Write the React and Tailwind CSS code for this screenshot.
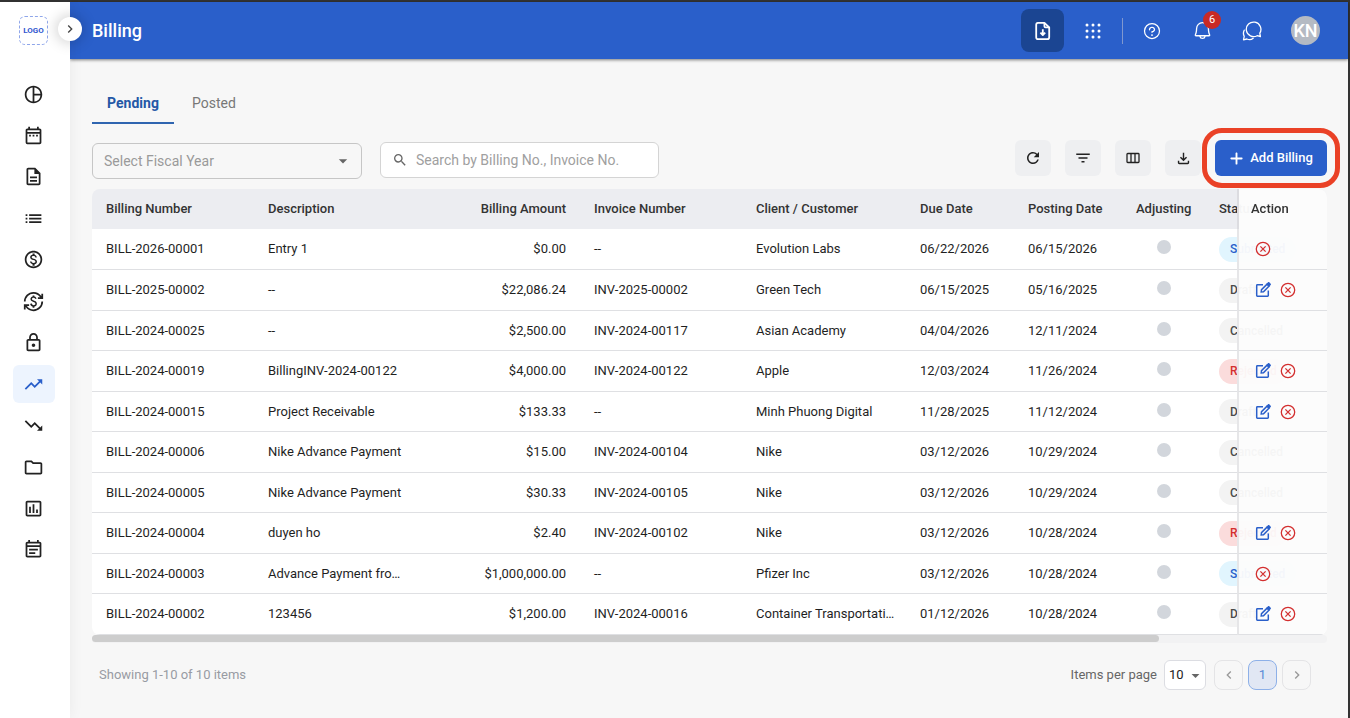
import { useState } from "react";
import clsx from "clsx";
import {
  MdPieChartOutline,
  MdOutlineDateRange,
  MdOutlineDescription,
  MdList,
  MdOutlineMonetizationOn,
  MdCurrencyExchange,
  MdOutlineLock,
  MdTrendingUp,
  MdTrendingDown,
  MdOutlineFolder,
  MdOutlineInsertChart,
  MdOutlineEventNote,
  MdChevronRight,
  MdChevronLeft,
  MdArrowDropDown,
  MdSearch,
  MdRefresh,
  MdFilterList,
} from "react-icons/md";
import { PiBell, PiQuestion } from "react-icons/pi";
import { FaPlus } from "react-icons/fa6";

const navItems = [
  { label: "Dashboard", icon: MdPieChartOutline },
  { label: "Calendar", icon: MdOutlineDateRange },
  { label: "Documents", icon: MdOutlineDescription },
  { label: "Lists", icon: MdList },
  { label: "Payments", icon: MdOutlineMonetizationOn },
  { label: "Exchange", icon: MdCurrencyExchange },
  { label: "Closing", icon: MdOutlineLock },
  { label: "Receivables", icon: MdTrendingUp },
  { label: "Payables", icon: MdTrendingDown },
  { label: "Files", icon: MdOutlineFolder },
  { label: "Reports", icon: MdOutlineInsertChart },
  { label: "Notes", icon: MdOutlineEventNote },
];

const statusStyles = {
  Submitted: "bg-[#e1f5fe] text-[#2a5fca]",
  Draft: "bg-[#f3f3f3] text-[#4a4a4a]",
  Cancelled: "bg-[#f3f3f3] text-[#4a4a4a]",
  Rejected: "bg-[#fbdcdc] text-[#d32f2f]",
};

const billings = [
  ["BILL-2026-00001", "Entry 1", "$0.00", "--", "Evolution Labs", "06/22/2026", "06/15/2026", "Submitted"],
  ["BILL-2025-00002", "--", "$22,086.24", "INV-2025-00002", "Green Tech", "06/15/2025", "05/16/2025", "Draft"],
  ["BILL-2024-00025", "--", "$2,500.00", "INV-2024-00117", "Asian Academy", "04/04/2026", "12/11/2024", "Cancelled"],
  ["BILL-2024-00019", "BillingINV-2024-00122", "$4,000.00", "INV-2024-00122", "Apple", "12/03/2024", "11/26/2024", "Rejected"],
  ["BILL-2024-00015", "Project Receivable", "$133.33", "--", "Minh Phuong Digital", "11/28/2025", "11/12/2024", "Draft"],
  ["BILL-2024-00006", "Nike Advance Payment", "$15.00", "INV-2024-00104", "Nike", "03/12/2026", "10/29/2024", "Cancelled"],
  ["BILL-2024-00005", "Nike Advance Payment", "$30.33", "INV-2024-00105", "Nike", "03/12/2026", "10/29/2024", "Cancelled"],
  ["BILL-2024-00004", "duyen ho", "$2.40", "INV-2024-00102", "Nike", "03/12/2026", "10/28/2024", "Rejected"],
  ["BILL-2024-00003", "Advance Payment fro…", "$1,000,000.00", "--", "Pfizer Inc", "03/12/2026", "10/28/2024", "Submitted"],
  ["BILL-2024-00002", "123456", "$1,200.00", "INV-2024-00016", "Container Transportati…", "01/12/2026", "10/28/2024", "Draft"],
];

function EditIcon() {
  return (
    <svg width="16" height="16" viewBox="0 0 16 16" fill="none" stroke="currentColor" strokeWidth="1.5">
      <path d="M8 2.7H2.4a.7.7 0 0 0-.7.7v10.2c0 .4.3.7.7.7h10.2c.4 0 .7-.3.7-.7V8.5" />
      <path d="M6.2 10l.3-2.3 5.6-5.6 2 2-5.6 5.6z" />
      <path d="M11.3 2l1.7-1.7c.4-.4 1-.4 1.3 0l1.4 1.4c.4.4.4.9 0 1.3L14 4.7z" fill="currentColor" stroke="none" />
    </svg>
  );
}

function CancelIcon() {
  return (
    <svg width="16" height="16" viewBox="0 0 16 16" fill="none" stroke="currentColor" strokeWidth="1.3">
      <circle cx="8" cy="8" r="6.7" />
      <path d="M5.4 5.4l5.2 5.2M10.6 5.4l-5.2 5.2" />
    </svg>
  );
}

function DownloadIcon() {
  return (
    <svg width="17" height="17" viewBox="0 -960 960 960" fill="currentColor">
      <path d="M480-320 280-520l56-58 104 104v-326h80v326l104-104 56 58-200 200ZM240-160q-33 0-56.5-23.5T160-240v-120h80v120h480v-120h80v120q0 33-23.5 56.5T720-160H240Z" />
    </svg>
  );
}

function ColumnsIcon() {
  return (
    <svg width="14" height="12" viewBox="0 0 14 12" fill="none" stroke="currentColor" strokeWidth="1.3">
      <rect x="1" y="1.5" width="12" height="9" rx="0.8" />
      <path d="M5 1.5v9M9 1.5v9" />
    </svg>
  );
}

function FileDownIcon() {
  return (
    <svg width="16" height="20" viewBox="0 0 16 20" fill="none" stroke="currentColor" strokeWidth="1.8" strokeLinejoin="round">
      <path d="M3 1.8h6.4l4.8 4.6v9.8a2 2 0 0 1-2 2H3a1.8 1.8 0 0 1-1.8-2V3.8a2 2 0 0 1 1.8-2z" />
      <path d="M9.4 1.8v3.4c0 .7.5 1.2 1.2 1.2h3.6" />
      <path d="M7.8 8.2v5.6M5.4 11.6l2.4 2.4 2.4-2.4" />
    </svg>
  );
}

function ChatIcon() {
  return (
    <svg width="20" height="20" viewBox="0 0 20 20" fill="none" stroke="currentColor" strokeWidth="1.3" strokeLinejoin="round" strokeLinecap="round">
      <path d="M17.8 12.2A7.3 7.3 0 1 0 15.2 14.7l3.2.8z" />
      <path d="M2.2 9.2c-1 2-1 4.2 0 6.1L1.5 18.8l3.4-.8c2 1 4.5.8 6.3-.7" />
    </svg>
  );
}

function DotsIcon() {
  return (
    <svg width="16" height="16" viewBox="0 0 16 16" fill="currentColor">
      {[2, 8, 14].map((y) => [2, 8, 14].map((x) => <circle key={`${x}-${y}`} cx={x} cy={y} r="1.5" />))}
    </svg>
  );
}

function Sidebar() {
  return (
    <aside className="relative z-10 flex w-[70px] shrink-0 flex-col items-center bg-white pr-[3px] shadow-[0_0_14px_rgba(0,0,0,0.06)]">
      <a
        href="#"
        className="mt-[14px] flex size-[29px] items-center justify-center rounded-md border border-dashed border-[#8fa6ea] text-[8px] font-bold text-[#3357d0]"
      >
        LOGO
      </a>
      <button
        aria-label="Expand menu"
        className="absolute top-[15px] -right-3 flex size-6 items-center justify-center rounded-full bg-white text-[#444] shadow-[0_0_14px_2px_rgba(0,0,0,0.18)]"
      >
        <MdChevronRight size={16} />
      </button>
      <nav className="mt-[30px] flex h-[494px] flex-col justify-between">
        {navItems.map(({ label, icon: Icon }) => (
          <a
            key={label}
            href="#"
            aria-label={label}
            className={clsx(
              "flex h-[38px] w-[42px] items-center justify-center rounded-md",
              label === "Receivables" ? "bg-[#edf4fe] text-[#2a5fca]" : "text-[#222]"
            )}
          >
            <Icon size={21} />
          </a>
        ))}
      </nav>
    </aside>
  );
}

function Header() {
  return (
    <header className="flex h-[57px] items-center justify-between bg-[#2a5fca] pr-7 pl-[22px] text-white shadow-[0_1px_3px_rgba(0,0,0,0.5)]">
      <h1 className="text-lg font-medium">Billing</h1>
      <div className="flex items-center">
        <button aria-label="Import file" className="flex size-[43px] items-center justify-center rounded-lg bg-[#1b4592]">
          <FileDownIcon />
        </button>
        <button aria-label="Apps" className="ml-[21px]">
          <DotsIcon />
        </button>
        <span className="ml-[21px] h-[26px] w-px bg-[#8098cf]" />
        <button aria-label="Help" className="ml-[19px]">
          <PiQuestion size={20} />
        </button>
        <button aria-label="Notifications" className="relative ml-[30px]">
          <PiBell size={21} />
          <span className="absolute -top-[9px] left-[11px] flex size-[18px] items-center justify-center rounded-full bg-[#c92a25] text-[11px]">
            6
          </span>
        </button>
        <button aria-label="Messages" className="ml-[29px]">
          <ChatIcon />
        </button>
        <button className="ml-[29px] flex size-[29px] items-center justify-center rounded-full bg-[#b4bac3] text-lg font-medium">
          KN
        </button>
      </div>
    </header>
  );
}

function Toolbar() {
  const tools = [
    ["Refresh", <MdRefresh size={18} />],
    ["Filter", <MdFilterList size={18} />],
    ["Columns", <ColumnsIcon />],
    ["Download", <DownloadIcon />],
  ];
  return (
    <div className="mt-4 flex items-start justify-between">
      <div className="flex items-start gap-[18px] pt-[2px]">
        <div className="relative mt-px">
          <select
            aria-label="Fiscal year"
            className="h-9 w-[270px] appearance-none rounded-md border border-[#c6c6c6] pl-[11px] text-sm text-[#9a9a9a]"
          >
            <option>Select Fiscal Year</option>
          </select>
          <MdArrowDropDown size={20} className="pointer-events-none absolute top-2 right-[9px] text-[#666]" />
        </div>
        <label className="flex h-9 w-[279px] items-center rounded-md border border-[#d4d4d4] bg-white pl-[11px] text-[#666]">
          <MdSearch size={16} />
          <input
            aria-label="Search billings"
            placeholder="Search by Billing No., Invoice No."
            className="ml-2 min-w-0 flex-1 text-sm outline-none placeholder:text-[#a0a0a0]"
          />
        </label>
      </div>
      <div className="flex items-center gap-[14px]">
        {tools.map(([label, icon]) => (
          <button
            key={label}
            aria-label={label}
            className="flex size-9 items-center justify-center rounded-md bg-[#eeeff1] text-[#222]"
          >
            {icon}
          </button>
        ))}
        <div className="relative">
          <button className="flex h-9 w-[112px] items-center justify-center gap-[6px] rounded-md bg-[#2a5fca] text-[13px] font-medium text-white">
            <FaPlus size={15} />
            Add Billing
          </button>
          <span className="pointer-events-none absolute -inset-x-[13px] -inset-y-3 rounded-[20px] border-5 border-[#ea4126]" />
        </div>
      </div>
    </div>
  );
}

function BillingTable() {
  const th = "h-10 pl-[14px] text-left font-medium";
  const td = "truncate pr-2 pl-[14px]";
  return (
    <div>
      <div className="overflow-x-auto rounded-lg [scrollbar-width:none]">
        <table className="w-full min-w-[1429px] table-fixed border-separate border-spacing-0 text-[13px] text-[#1f1f1f]">
          <colgroup>
            <col className="w-[162px]" />
            <col className="w-[162px]" />
            <col className="w-[164px]" />
            <col className="w-[162px]" />
            <col className="w-[164px]" />
            <col className="w-[108px]" />
            <col className="w-[108px]" />
            <col className="w-[83px]" />
            <col />
            <col className="w-[90px]" />
          </colgroup>
          <thead>
            <tr className="bg-[#ecedf1] text-[#333]">
              <th className={th}>Billing Number</th>
              <th className={th}>Description</th>
              <th className="px-[14px] text-right font-medium">Billing Amount</th>
              <th className={th}>Invoice Number</th>
              <th className={th}>Client / Customer</th>
              <th className={th}>Due Date</th>
              <th className={th}>Posting Date</th>
              <th className={th}>Adjusting</th>
              <th className={th}>Status</th>
              <th className="sticky right-0 border-l-2 border-[#dcdce0] bg-[#fcfcfc]/97 px-3 text-left font-medium">
                Action
              </th>
            </tr>
          </thead>
          <tbody>
            {billings.map(([no, desc, amount, invoice, client, due, posted, status]) => (
              <tr
                key={no}
                className="h-10 bg-white first:h-[41px] even:h-[41px] [&>td]:border-b [&>td]:border-b-[#dfe0e3]"
              >
                <td className={td}>{no}</td>
                <td className={td}>{desc}</td>
                <td className="px-[14px] text-right">{amount}</td>
                <td className={td}>{invoice}</td>
                <td className={td}>{client}</td>
                <td className={td}>{due}</td>
                <td className={td}>{posted}</td>
                <td className="pb-1">
                  <span className="mx-auto block size-[14px] rounded-full bg-[#d2d6dc]" />
                </td>
                <td className="px-[14px]">
                  <span
                    className={clsx(
                      "inline-flex h-[25px] items-center rounded-full px-[11px] text-xs font-medium",
                      statusStyles[status]
                    )}
                  >
                    {status}
                  </span>
                </td>
                <td className="sticky right-0 border-l-2 border-l-[#e6e6e8] bg-[#fcfcfc]/96">
                  <div className="flex items-center gap-[9px] pl-4">
                    {(status === "Draft" || status === "Rejected") && (
                      <button aria-label={`Edit ${no}`} className="text-[#2a5fca]">
                        <EditIcon />
                      </button>
                    )}
                    {status !== "Cancelled" && (
                      <button aria-label={`Cancel ${no}`} className="text-[#d32f2f]">
                        <CancelIcon />
                      </button>
                    )}
                  </div>
                </td>
              </tr>
            ))}
          </tbody>
        </table>
      </div>
      <div className="h-2 rounded bg-[#f2f2f3]">
        <div className="h-[7px] w-[86.4%] rounded bg-[#cdcdcd]" />
      </div>
    </div>
  );
}

function Pagination() {
  const button = "flex h-[30px] w-[29px] items-center justify-center rounded-lg border";
  return (
    <footer className="mt-[17px] flex items-center justify-between pr-4 pl-[7px] text-[13px]">
      <p className="text-[#989ba3]">Showing 1-10 of 10 items</p>
      <div className="flex items-center">
        <label htmlFor="page-size" className="text-[#666]">
          Items per page
        </label>
        <div className="relative ml-[7px]">
          <select
            id="page-size"
            className="h-[30px] w-[42px] appearance-none rounded-md border border-[#dcdde2] bg-white pl-1 text-[13px] text-[#222]"
          >
            <option>10</option>
          </select>
          <MdArrowDropDown size={19} className="pointer-events-none absolute top-[6px] right-[1px] text-[#666]" />
        </div>
        <div className="ml-2 flex gap-[5px]">
          <button aria-label="Previous page" className={clsx(button, "border-[#e4e4e6] text-[#999]")}>
            <MdChevronLeft size={16} />
          </button>
          <button className={clsx(button, "border-[#8db0e8] bg-[#e1e7f4] text-[#5c8ad6]")}>1</button>
          <button aria-label="Next page" className={clsx(button, "border-[#e4e4e6] text-[#999]")}>
            <MdChevronRight size={16} />
          </button>
        </div>
      </div>
    </footer>
  );
}

export default function App() {
  const [tab, setTab] = useState("Pending");

  return (
    <div className="flex min-h-screen border-t-2 border-r-2 border-[#333] bg-[#f7f7f7] font-['Roboto',sans-serif]">
      <Sidebar />
      <div className="min-w-0 flex-1">
        <Header />
        <main className="pr-[21px] pl-[22px]">
          <div role="tablist" className="flex pt-[23px]">
            {["Pending", "Posted"].map((name) => (
              <button
                key={name}
                role="tab"
                aria-selected={tab === name}
                onClick={() => setTab(name)}
                className={clsx(
                  "h-[42px] border-b-2 pt-0.5 text-sm",
                  tab === name
                    ? "w-[82px] border-[#2f65b0] font-bold text-[#2458a6]"
                    : "border-transparent px-[18px] text-[#777]"
                )}
              >
                {name}
              </button>
            ))}
          </div>
          <Toolbar />
          <div className="mt-[10px]">
            <BillingTable />
          </div>
          <Pagination />
        </main>
      </div>
    </div>
  );
}
